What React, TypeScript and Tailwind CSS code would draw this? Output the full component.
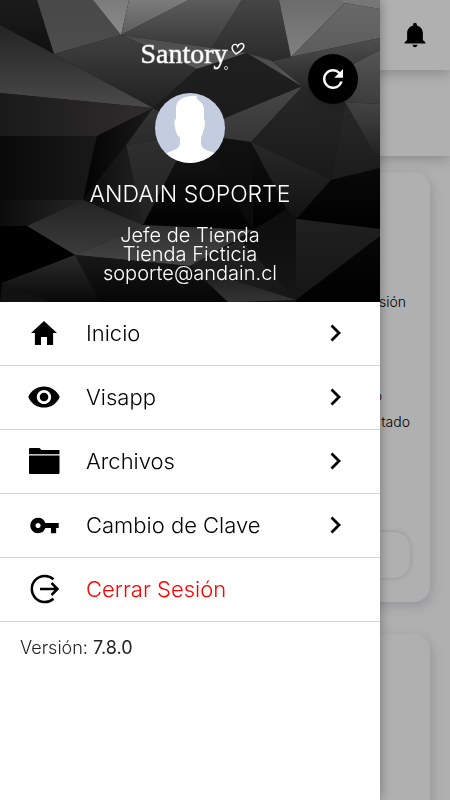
import { ReactNode } from 'react';
import { IoMdEye, IoMdHome, IoMdNotifications } from 'react-icons/io';
import { MdRefresh, MdVpnKey } from 'react-icons/md';

const FolderIcon = () => (
  <svg viewBox="0 0 32 28" className="w-8 h-7" fill="currentColor">
    <path d="M2 1h9.500l2 2h17.500q.5 0 .5.500v3.800h-30.500v-5.300q0-1 1-1z" />
    <path d="M1 8.600h30.500v17.400q0 1-1 1h-28.500q-1 0-1-1z" />
  </svg>
);

const LogoutIcon = () => (
  <svg
    viewBox="0 0 32 32"
    className="w-8 h-8"
    fill="none"
    stroke="currentColor"
    strokeWidth="2.5"
  >
    <path d="M25.500 6.300A13 13 0 1 0 25.500 25.700M12 16h18M23.500 10l6 6-6 6" />
  </svg>
);

const ChevronIcon = () => (
  <svg
    viewBox="0 0 12 18"
    className="w-3 h-[18px]"
    fill="none"
    stroke="currentColor"
    strokeWidth="2.8"
  >
    <path d="M1.500 1.500l7.500 7.500L1.500 16.500" />
  </svg>
);

interface MenuItem {
  label: string;
  icon: ReactNode;
  danger?: boolean;
}

const menuItems: MenuItem[] = [
  { label: 'Inicio', icon: <IoMdHome size={34} /> },
  { label: 'Visapp', icon: <IoMdEye size={36} className="shrink-0" /> },
  { label: 'Archivos', icon: <FolderIcon /> },
  { label: 'Cambio de Clave', icon: <MdVpnKey size={31} /> },
  { label: 'Cerrar Sesión', icon: <LogoutIcon />, danger: true },
];

// Facets of the header backdrop: points, top/left shade, bottom/right shade, direction
const facets: [string, string, string, 'v' | 'h'][] = [
  ['0,0 37,0 54,54 0,25', '#1b1b1b', '#101010', 'v'],
  ['37,0 93,0 121,35 54,54', '#484848', '#4d4d4d', 'v'],
  ['93,0 129,0 121,35', '#7c7c7c', '#8a8a8a', 'v'],
  ['129,0 189,0 121,35', '#7b7b7b', '#5c5c5c', 'v'],
  ['189,0 242,0 212,48 121,35', '#5c5c5c', '#383838', 'v'],
  ['242,0 279,0 291,57 270,61 247,53 212,48', '#454545', '#2b2b2b', 'v'],
  ['279,0 345,0 345,3 291,57', '#6c6c6c', '#808080', 'v'],
  ['345,3 380,9 380,38 291,57', '#686868', '#5c5c5c', 'v'],
  ['340,0 380,0 380,9 345,3', '#777777', '#777777', 'v'],
  ['121,35 212,48 247,53 197,69', '#4b4b4b', '#595959', 'v'],
  ['121,35 197,69 153,108 54,54', '#414141', '#202020', 'v'],
  ['0,25 54,54 153,108 0,93', '#232323', '#4a4a4a', 'v'],
  ['0,93 153,108 97,136 0,136', '#1a1a1a', '#302d2d', 'h'],
  ['0,136 97,136 93,150 83,200 0,200', '#090909', '#191919', 'h'],
  ['97,136 153,108 126,145 83,200', '#020202', '#1b1b1b', 'h'],
  ['153,108 190,128 190,135 126,145', '#343434', '#292929', 'v'],
  ['197,69 247,53 303,87 225,118 158,110 153,108', '#202020', '#1b1b1b', 'v'],
  ['247,53 272,61 303,87', '#494949', '#5a5a5a', 'v'],
  ['272,61 380,38 380,50 310,87 303,87', '#4f4f4f', '#292929', 'v'],
  ['310,87 380,50 380,104 345,102', '#555555', '#3d3d3d', 'v'],
  ['303,86 225,118 200,135 251,142', '#484848', '#353535', 'v'],
  ['303,86 310,87 345,102 337,150 331,180 275,165 251,142', '#282828', '#191919', 'v'],
  ['345,102 380,104 380,168 372,150', '#454545', '#191919', 'v'],
  ['345,102 380,165 380,168 331,180 337,150', '#292929', '#1b1b1b', 'v'],
  ['126,145 190,135 143,225', '#303030', '#202020', 'v'],
  ['83,200 126,145 143,225', '#0b0b0b', '#202020', 'h'],
  ['190,135 210,155 253,230 143,225', '#191919', '#000000', 'v'],
  ['200,135 251,142 252,230', '#111111', '#090909', 'v'],
  ['251,142 287,209 253,230', '#111111', '#000000', 'v'],
  ['251,142 331,180 296,219 287,209', '#292929', '#121212', 'v'],
  ['331,180 380,168 380,229 296,219', '#090909', '#000000', 'v'],
  ['0,200 83,200 27,226 0,226', '#0c0c0c', '#252525', 'h'],
  ['83,200 143,225 75,255 27,226', '#242424', '#3b3b3b', 'v'],
  ['0,226 27,226 75,255 2,283 0,302', '#000000', '#000000', 'v'],
  ['143,225 253,230 190,266 75,255', '#303030', '#454545', 'v'],
  ['75,255 2,283 50,302 100,302', '#2c2c2c', '#080808', 'v'],
  ['75,255 190,266 228,302 100,302', '#181818', '#050505', 'v'],
  ['253,230 287,209 296,219 296,300 240,240', '#0d0d0d', '#161616', 'v'],
  ['190,266 240,240 296,300', '#242424', '#161616', 'v'],
  ['190,266 296,300 228,302', '#171717', '#343434', 'v'],
  ['296,219 380,229 380,236 296,300', '#202020', '#151515', 'v'],
  ['380,236 380,302 296,302 296,300', '#070707', '#000000', 'v'],
];

const HeaderBackdrop = () => (
  <svg
    viewBox="0 0 380 302"
    preserveAspectRatio="none"
    className="absolute inset-0 w-full h-full"
    aria-hidden="true"
  >
    <rect width="380" height="302" fill="#111" />
    {facets.map(([points, from, to, direction], i) => (
      <g key={points}>
        <linearGradient
          id={`facet-${i}`}
          x1="0"
          y1="0"
          x2={direction === 'h' ? '1' : '0'}
          y2={direction === 'h' ? '0' : '1'}
        >
          <stop offset="0" stopColor={from} />
          <stop offset="1" stopColor={to} />
        </linearGradient>
        <polygon points={points} fill={`url(#facet-${i})`} />
      </g>
    ))}
  </svg>
);

const Logo = () => (
  <div className="flex items-start pl-1 text-white">
    <span className="font-['Liberation_Serif',serif] text-[28px] leading-8 [-webkit-text-stroke:1px_#ffffff80]">
      Santory
    </span>
    {/* Heart and the small registered mark under the last letter */}
    <svg
      viewBox="0 0 16 32"
      className="w-4 h-8 overflow-visible"
      fill="none"
      stroke="currentColor"
      aria-hidden="true"
    >
      <path
        d="M8 16C4 12.500 3.500 10 4.500 8C6 5.500 9 6 9.800 8.500C11 5.500 14.500 4.500 15.700 7C17 10.500 12 13.500 8 16z"
        strokeWidth="1.4"
      />
      <circle cx="-2" cy="30" r="1.600" strokeWidth=".7" />
    </svg>
  </div>
);

const Avatar = () => (
  <svg
    viewBox="0 0 70 70"
    className="w-[70px] h-[70px] rounded-full bg-[#c4cce0]"
    fill="#fff"
    role="img"
    aria-label="Perfil"
  >
    <path d="M43 3C33 2 21 5 21 15V26C18 27 20 34 21 39C22 43 25 43 25 46V50C25 55 20 57 14 59L7 62V70H63V62L57 59C50 57 46 55 46 50V46C46 43 48 42 48 38C50 34 51 28 49 27V15C48 11 46 9 43 7L41 4Z" />
  </svg>
);

const Page = () => (
  <div className="h-screen overflow-hidden flex flex-col bg-white text-sm">
    <header className="relative z-20 h-[70px] shrink-0 flex items-center justify-end pr-5 bg-white shadow-[0_2px_14px_rgba(0,0,0,0.25)]">
      <button type="button" aria-label="Notificaciones">
        <IoMdNotifications size={30} />
      </button>
    </header>
    <div className="relative z-10 h-[86px] shrink-0 bg-white shadow-[0_2px_14px_rgba(0,0,0,0.25)]" />
    <main className="flex flex-col gap-8 px-5 pt-4">
      <section className="h-[430px] shrink-0 flex flex-col justify-between rounded-2xl px-5 pb-6 pt-[120px] shadow-[2px_4px_12px_rgba(60,65,90,0.2)]">
        <div className="flex flex-col items-end font-light">
          <p className="leading-5 pr-1">sión</p>
          <p className="leading-5 pt-[74px] pr-7">o</p>
          <p className="leading-5 pt-[6px]">tado</p>
        </div>
        <div className="h-[46px] rounded-2xl shadow-[0_0_5px_rgba(0,0,0,0.18)]" />
      </section>
      <section className="h-[430px] shrink-0 rounded-2xl shadow-[2px_4px_12px_rgba(60,65,90,0.2)]" />
    </main>
  </div>
);

const MenuRow = ({ label, icon, danger }: MenuItem) => (
  <li className="border-b border-[#d4d4d4]">
    <button
      type="button"
      className="w-full h-[63px] flex items-center pl-7 pr-[38px] pb-px"
    >
      <span className="w-8 flex justify-center">{icon}</span>
      <span
        className={`ml-[26px] flex-1 text-left text-[22px] leading-7 font-light ${
          danger ? 'text-[#ff0000]' : 'text-black'
        }`}
      >
        {label}
      </span>
      {!danger && <ChevronIcon />}
    </button>
  </li>
);

export default function App() {
  return (
    <div className="font-['Inter',sans-serif] text-black">
      <Page />
      <div className="fixed inset-0 z-30 bg-black/31" />
      <aside className="fixed inset-y-0 left-0 right-[70px] z-40 bg-white shadow-[0_0_12px_rgba(0,0,0,0.35)]">
        <div className="relative h-[302px]">
          <HeaderBackdrop />
          <div className="relative flex flex-col items-center pt-[38px] text-white">
            <Logo />
            <div className="pt-[23px]">
              <Avatar />
            </div>
            <h1 className="pt-[17px] text-[23px] leading-7 font-light">
              ANDAIN SOPORTE
            </h1>
            <p className="pt-[18px] text-center text-[20px] leading-[19px] font-light">
              Jefe de Tienda
              <br />
              Tienda Ficticia
              <br />
              soporte@andain.cl
            </p>
          </div>
          <button
            type="button"
            aria-label="Actualizar"
            className="absolute top-[54px] right-[22px] w-[50px] h-[50px] rounded-full bg-black text-white flex items-center justify-center shadow-lg"
          >
            <MdRefresh size={30} />
          </button>
        </div>
        <nav>
          <ul>
            {menuItems.map((item) => (
              <MenuRow key={item.label} {...item} />
            ))}
          </ul>
        </nav>
        <p className="pl-5 pt-3 text-[18px] leading-7 font-light text-[#222]">
          Versión: <span className="font-normal">7.8.0</span>
        </p>
      </aside>
    </div>
  );
}
